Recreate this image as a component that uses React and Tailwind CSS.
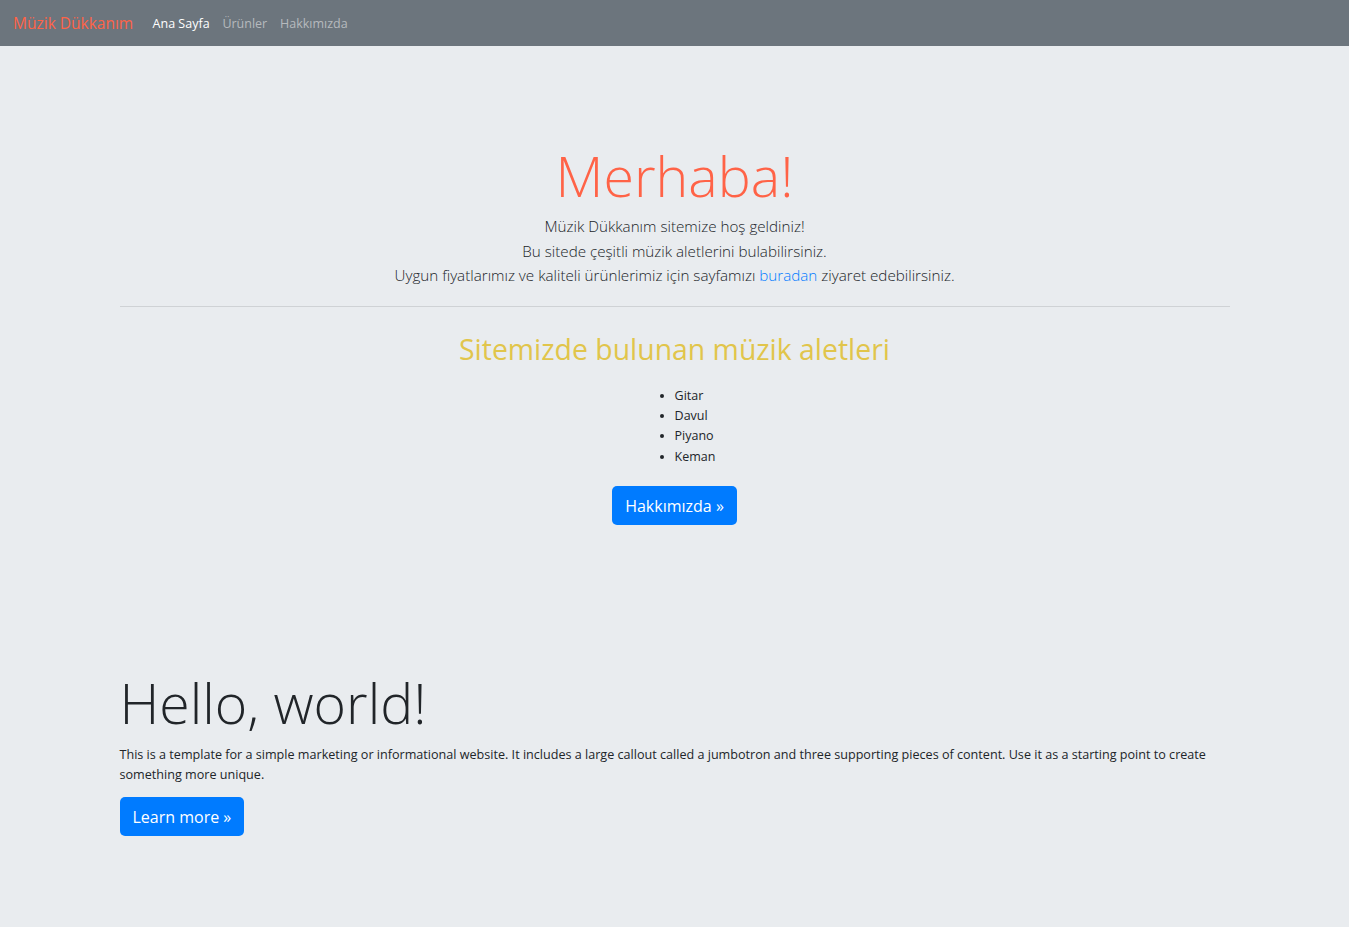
import React from 'react';

const font = { fontFamily: '"Open Sans", "Noto Sans", sans-serif' };

const Navbar = () => (
  <nav className="flex items-center h-[46px] px-[13px] pt-[2px] bg-[#6c757d]">
    <a className="mr-[13px] text-[15.5px] text-[#ff6347]">Müzik Dükkanım</a>
    <div className="flex items-center text-[12.5px]">
      <a className="px-[6.4px] text-white">Ana Sayfa</a>
      <a className="px-[6.4px] text-[#b6babe]">Ürünler</a>
      <a className="px-[6.4px] text-[#b6babe]">Hakkımızda</a>
    </div>
  </nav>
);

const App = () => {
  const aletler = ['Gitar', 'Davul', 'Piyano', 'Keman'];

  return (
    <div className="min-h-[927px] bg-[#e9ecef] text-[#212529]" style={font}>
      <Navbar />

      {/* Karşılama */}
      <section className="w-[1110px] mx-auto pt-[95px] text-center">
        <h1 className="text-[55.5px] leading-[69px] font-light text-[#ff6347]">Merhaba!</h1>
        <p className="mt-[4px] text-[15.2px] leading-[24.5px] font-light">
          Müzik Dükkanım sitemize hoş geldiniz!<br />
          Bu sitede çeşitli müzik aletlerini bulabilirsiniz.<br />
          Uygun fiyatlarımız ve kaliteli ürünlerimiz için sayfamızı{' '}
          <a className="text-[#007bff]">buradan</a> ziyaret edebilirsiniz.
        </p>
        <hr className="mt-[18px] border-0 border-t border-[#cfd2d5]" />
        <h2 className="mt-[24px] text-[28.4px] leading-[37px] text-[#e1c54b]">Sitemizde bulunan müzik aletleri</h2>
        <ul className="mt-[18px] inline-block text-left list-disc pl-[41px] text-[12.5px] leading-[20.4px]">
          {aletler.map((a) => (
            <li key={a}>{a}</li>
          ))}
        </ul>
        <div className="mt-[19px]">
          <button className="h-[39px] px-[13px] rounded-[5px] bg-[#007bff] text-white text-[16px]">
            Hakkımızda »
          </button>
        </div>
      </section>

      {/* Jumbotron */}
      <section className="w-[1110px] mx-auto mt-[143px]">
        <h1 className="text-[55.4px] leading-[69px] font-light">Hello, world!</h1>
        <p className="mt-[8px] text-[12.6px] leading-[20px]">
          This is a template for a simple marketing or informational website. It includes a large callout called a jumbotron and three supporting pieces of content. Use it as a starting point to create something more unique.
        </p>
        <button className="mt-[12px] h-[39px] px-[13px] rounded-[5px] bg-[#007bff] text-white text-[16px]">
          Learn more »
        </button>
      </section>
    </div>
  );
};

export default App;
